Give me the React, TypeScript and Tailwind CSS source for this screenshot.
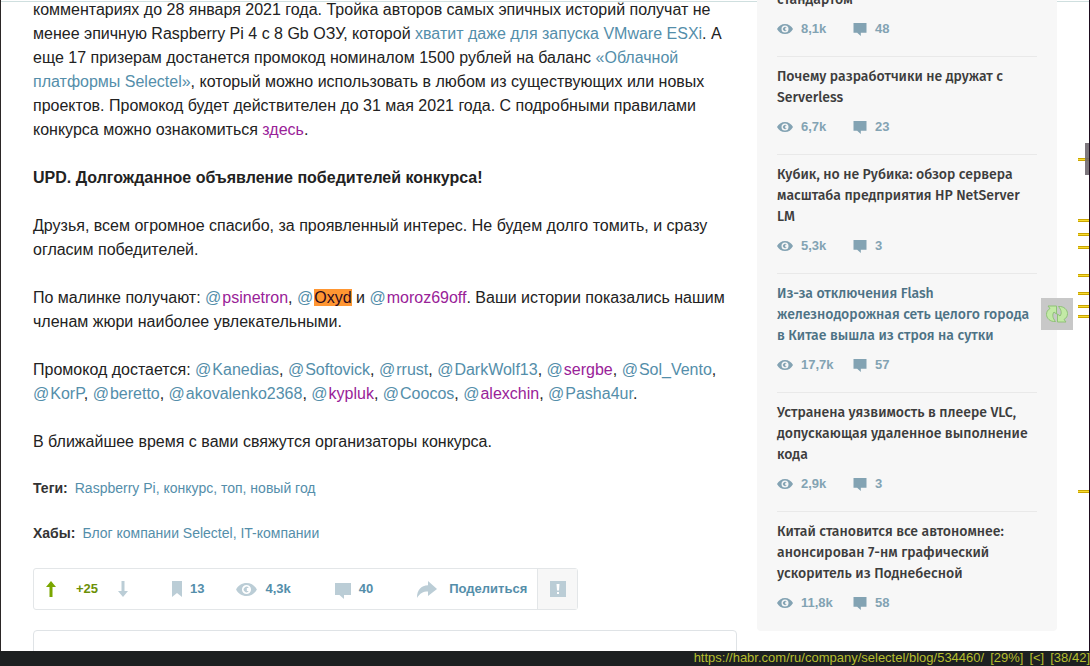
import React from "react";

interface MentionProps {
  name: string;
  visited?: boolean;
  found?: boolean;
}

interface NewsItem {
  id: number;
  title: string;
  views: string;
  comments: number;
  active?: boolean;
}

const news: NewsItem[] = [
  { id: 1, title: "стандартом", views: "8,1k", comments: 48 },
  {
    id: 2,
    title: "Почему разработчики не дружат с Serverless",
    views: "6,7k",
    comments: 23,
  },
  {
    id: 3,
    title: "Кубик, но не Рубика: обзор сервера масштаба предприятия HP NetServer LM",
    views: "5,3k",
    comments: 3,
  },
  {
    id: 4,
    title: "Из-за отключения Flash железнодорожная сеть целого города в Китае вышла из строя на сутки",
    views: "17,7k",
    comments: 57,
    active: true,
  },
  {
    id: 5,
    title: "Устранена уязвимость в плеере VLC, допускающая удаленное выполнение кода",
    views: "2,9k",
    comments: 3,
  },
  {
    id: 6,
    title: "Китай становится все автономнее: анонсирован 7-нм графический ускоритель из Поднебесной",
    views: "11,8k",
    comments: 58,
  },
];

const winners: MentionProps[] = [
  { name: "Kanedias" },
  { name: "Softovick" },
  { name: "rrust" },
  { name: "DarkWolf13" },
  { name: "sergbe", visited: true },
  { name: "Sol_Vento" },
  { name: "KorP" },
  { name: "beretto" },
  { name: "akovalenko2368" },
  { name: "kypluk", visited: true },
  { name: "Coocos" },
  { name: "alexchin", visited: true },
  { name: "Pasha4ur" },
];

// search hits shown along the scrollbar
const marks = [158, 219, 233, 246, 274, 292, 305, 315, 490];

const EyeIcon = ({ className }: { className: string }) => (
  <svg viewBox="0 0 32 20" className={className} fill="currentColor" aria-hidden="true">
    <path
      fillRule="evenodd"
      d="M16 0C9 0 3 4 0 10c3 6 9 10 16 10s13-4 16-10C29 4 23 0 16 0zm0 17a7 7 0 1 1 0-14 7 7 0 0 1 0 14z"
    />
    <path d="M19.500 7.700A4.200 4.200 0 1 0 19.500 12.300H16.500V7.700z" />
  </svg>
);

const CommentIcon = ({ className }: { className: string }) => (
  <svg viewBox="0 0 16 16" className={className} fill="currentColor" aria-hidden="true">
    <path d="M0 0h16v12H9v4l-4.500-4H0z" />
  </svg>
);

const ArrowIcon = ({ className }: { className: string }) => (
  <svg viewBox="0 0 10 16" className={className} fill="currentColor" aria-hidden="true">
    <path d="M5 0l5 6H6.500v10h-3V6H0z" />
  </svg>
);

const Mention = ({ name, visited, found }: MentionProps) => (
  <a href={"#" + name} className={visited ? "text-[#992298]" : "text-[#548eaa]"}>
    <span className="mr-px text-[#548eaa]">@</span>
    {found ? <mark className="bg-[#ff9632] text-[#2b0a1e]">{name}</mark> : name}
  </a>
);

const Article = () => (
  <div className="min-w-0 flex-1 pt-[9px]">
    <div className="space-y-6 text-base leading-6 text-[#222222]">
      <p>
        комментариях до 28 января 2021 года. Тройка авторов самых эпичных историй
        получат не менее эпичную Raspberry Pi 4 с 8 Gb ОЗУ, которой{" "}
        <a href="#esxi" className="text-[#548eaa]">
          хватит даже для запуска VMware ESXi
        </a>
        . А еще 17 призерам достанется промокод номиналом 1500 рублей на баланс{" "}
        <a href="#cloud" className="text-[#548eaa]">
          «Облачной платформы Selectel»
        </a>
        , который можно использовать в любом из существующих или новых проектов.
        Промокод будет действителен до 31 мая 2021 года. С подробными правилами
        конкурса можно ознакомиться{" "}
        <a href="#rules" className="text-[#992298]">
          здесь
        </a>
        .
      </p>
      <p className="font-bold">UPD. Долгожданное объявление победителей конкурса!</p>
      <p>
        Друзья, всем огромное спасибо, за проявленный интерес. Не будем долго томить,
        и сразу огласим победителей.
      </p>
      <p>
        По малинке получают: <Mention name="psinetron" visited />,{" "}
        <Mention name="Oxyd" found /> и <Mention name="moroz69off" visited />. Ваши
        истории показались нашим членам жюри наиболее увлекательными.
      </p>
      <p>
        Промокод достается:{" "}
        {winners.map((winner, i) => (
          <React.Fragment key={winner.name}>
            <Mention {...winner} />
            {i < winners.length - 1 ? ", " : "."}
          </React.Fragment>
        ))}
      </p>
      <p>В ближайшее время с вами свяжутся организаторы конкурса.</p>
    </div>

    <dl className="mt-6 space-y-6 text-sm leading-[21px]">
      <div className="flex gap-[7px]">
        <dt className="font-bold text-[#333333]">Теги:</dt>
        <dd className="text-[#548eaa]">
          <a href="#pi">Raspberry Pi</a>, <a href="#contest">конкурс</a>,{" "}
          <a href="#top">топ</a>, <a href="#newyear">новый год</a>
        </dd>
      </div>
      <div className="flex gap-[7px]">
        <dt className="font-bold text-[#333333]">Хабы:</dt>
        <dd className="text-[#548eaa]">
          <a href="#selectel">Блог компании Selectel</a>, <a href="#it">IT-компании</a>
        </dd>
      </div>
    </dl>

    <div className="mt-6 flex h-[42px] w-[545px] items-stretch rounded-[3px] border border-[#e3e6e8] text-[13px] font-bold text-[#548eaa]">
      <div className="flex flex-1 items-center gap-11 pl-3">
        <div className="flex items-center text-[#6c9007]">
          <button aria-label="Нравится">
            <ArrowIcon className="h-4 w-[10px] text-[#7aa600]" />
          </button>
          <span className="w-[62px] text-center">+25</span>
          <button aria-label="Не нравится">
            <ArrowIcon className="h-4 w-[10px] rotate-180 text-[#bbcdd6]" />
          </button>
        </div>
        <div className="flex items-center gap-8">
          <button className="flex items-center gap-2">
            <svg
              viewBox="0 0 10 16"
              className="h-4 w-[10px] text-[#bbcdd6]"
              fill="currentColor"
              aria-hidden="true"
            >
              <path d="M0 0h10v16l-5-4-5 4z" />
            </svg>
            13
          </button>
          <div className="flex items-center gap-2">
            <EyeIcon className="h-[13px] w-[21px] text-[#bbcdd6]" />
            4,3k
          </div>
        </div>
        <a href="#comments" className="flex items-center gap-2">
          <CommentIcon className="mt-1 size-4 text-[#bbcdd6]" />
          40
        </a>
        <button className="flex items-center gap-3">
          <svg
            viewBox="0 0 20 17"
            className="h-[17px] w-5 text-[#bbcdd6]"
            fill="currentColor"
            aria-hidden="true"
          >
            <path d="M11 0l9 8-9 7v-4.500C6 10.500 3 12 0 17 0 9 4 4.500 11 4.300z" />
          </svg>
          Поделиться
        </button>
      </div>
      <button
        aria-label="Пожаловаться"
        className="flex w-10 items-center justify-center border-l border-[#e3e6e8] bg-[#f7f7f7]"
      >
        <svg viewBox="0 0 16 16" className="size-4" aria-hidden="true">
          <path fill="#bbcdd6" d="M0 0h16v16H0z" />
          <path fill="#ffffff" d="M6.500 3h3l-.5 6.500H7zM7 11h2v2H7z" />
        </svg>
      </button>
    </div>

    <div className="mt-5 h-24 rounded-[4px] border border-[#dfe3e6]" />
  </div>
);

const Sidebar = () => (
  <aside className="w-[300px] shrink-0 self-start rounded-[4px] bg-[#f7f7f7] px-5 pb-px">
    <ul className="divide-y divide-[#e9e9e9]">
      {news.map((item) => (
        <li key={item.id} className="pb-[17px] pt-[9px] first:pt-0">
          <a
            href={"#post" + item.id}
            className={`block font-['Fira_Sans','Noto_Sans',sans-serif] text-sm font-medium leading-[21px] ${
              item.active ? "text-[#4d7285]" : "text-[#3d3d3d]"
            }`}
          >
            {item.title}
          </a>
          <div className="mt-[9px] flex h-5 items-center text-[13px] font-bold text-[#83a3b3]">
            <span className="flex w-[76px] items-center gap-2">
              <EyeIcon className="h-[10px] w-4" />
              {item.views}
            </span>
            <a href={"#comments" + item.id} className="flex items-center gap-2">
              <CommentIcon className="h-[13px] w-[14px]" />
              {item.comments}
            </a>
          </div>
        </li>
      ))}
    </ul>
  </aside>
);

const App = () => {
  return (
    <div className="flex h-screen flex-col overflow-hidden bg-white font-['Liberation_Sans',Arial,sans-serif]">
      <div className="relative min-h-0 flex-1 overflow-hidden border-x border-l-[#2b2626] border-r-[#1d0b1e]">
        <div className="h-[2px] border-b border-[#cfdfdf]" />
        <main className="-mt-[13px] flex gap-5 px-8">
          <Article />
          <Sidebar />
        </main>

        <button
          aria-label="Обновить"
          className="absolute right-4 top-[298px] flex size-8 items-center justify-center bg-[#c8c8c8]"
        >
          <svg viewBox="0 0 22 18" className="h-[18px] w-[22px]" aria-hidden="true">
            <g fill="#c3eaa6" stroke="#8fc277" strokeLinejoin="round">
              <path d="M2 1h8.500v8L8 7c-2 2.500-1.500 6 1.500 9.500C4 17 .5 13 .5 9.500.5 7 1.500 5 4 3.500z" />
              <path
                d="M2 1h8.500v8L8 7c-2 2.500-1.500 6 1.500 9.500C4 17 .5 13 .5 9.500.5 7 1.500 5 4 3.500z"
                transform="rotate(180 11 9)"
              />
            </g>
          </svg>
        </button>

        {marks.map((top) => (
          <div
            key={top}
            className="absolute right-0 h-[3px] w-[11px] border-y border-[#c9a400] bg-[#f7dc30]"
            style={{ top }}
          />
        ))}
        <div className="absolute right-0 top-[143px] h-8 w-1 bg-[#6f686f]/90" />
      </div>
      <footer className="flex h-[15px] shrink-0 justify-end gap-[6px] whitespace-nowrap bg-[#1d2021] text-[13px] leading-[14px] text-[#b5bd2e]">
        <span>https://habr.com/ru/company/selectel/blog/534460/</span>
        <span>[29%]</span>
        <span>[&lt;]</span>
        <span>[38/42]</span>
      </footer>
    </div>
  );
};

export default App;
